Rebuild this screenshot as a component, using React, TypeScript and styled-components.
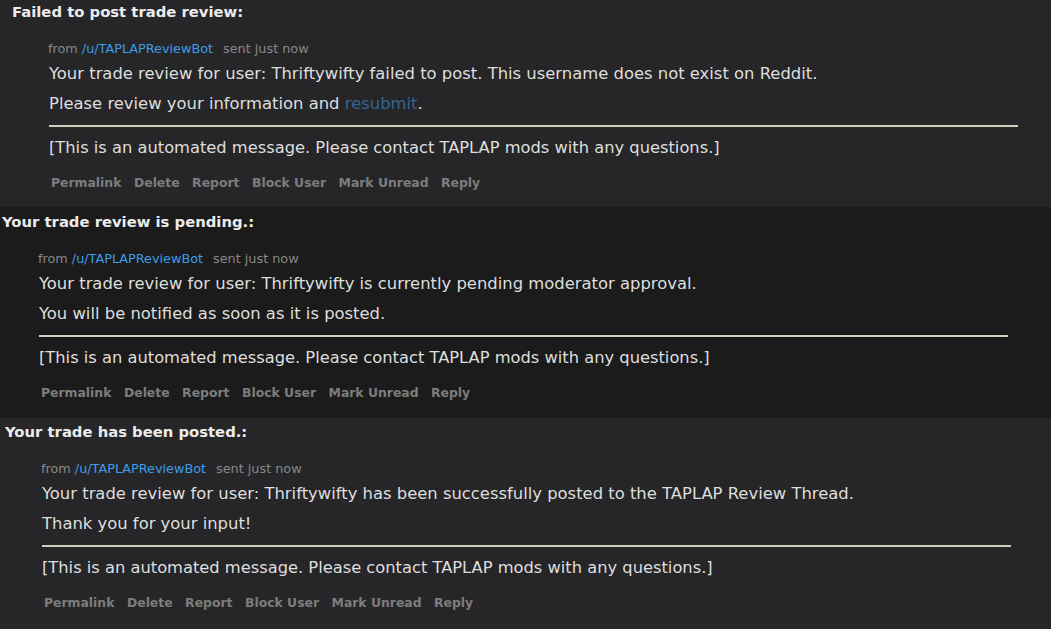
import React from "react";
import styled, { createGlobalStyle } from "styled-components";

const Global = createGlobalStyle`
  html, body { margin: 0; padding: 0; background: #262628; }
  body { font-family: "DejaVu Sans", Verdana, sans-serif; }
`;

const Page = styled.div`
  width: 1051px;
  height: 629px;
  overflow: hidden;
  display: flex;
  flex-direction: column;
`;

const Panel = styled.section<{ $bg: string; $left: number; $height: number; $top: number }>`
  background: ${(p) => p.$bg};
  height: ${(p) => p.$height}px;
  padding: ${(p) => p.$top}px 0 0 ${(p) => p.$left}px;
  box-sizing: border-box;
  flex-shrink: 0;
`;

const Title = styled.h2`
  margin: 0;
  font-size: 14.8px;
  line-height: 18px;
  font-weight: bold;
  color: #ececec;
`;

const Message = styled.div`
  margin: 19px 0 0 36px;
  width: 970px;
`;

const Meta = styled.div`
  font-size: 12.8px;
  line-height: 18px;
  color: #888888;
  margin-bottom: 1px;
`;

const UserLink = styled.a`
  color: #3c9de8;
  text-decoration: none;
  margin-right: 10px;
`;

const Body = styled.p`
  margin: 0 0 0 1px;
  font-size: 16.4px;
  line-height: 30px;
  color: #dedede;
`;

const Footnote = styled(Body)`
  font-size: 16.3px;
`;

const Resubmit = styled.a`
  color: #34658f;
  text-decoration: none;
`;

const Rule = styled.hr`
  border: 0;
  height: 2px;
  background: #d1ccbb;
  margin: 6px 0 6px 1px;
`;

const Buttons = styled.ul`
  list-style: none;
  margin: 11px 0 0 3px;
  padding: 0;
  display: flex;
  gap: 12.5px;
`;

const Button = styled.li`
  font-size: 12.4px;
  line-height: 18px;
  font-weight: bold;
  color: #7d7d7d;
`;

type Msg = {
  title: string;
  bg: string;
  left: number;
  height: number;
  top: number;
  lines: React.ReactNode[];
};

const actions = ["Permalink", "Delete", "Report", "Block User", "Mark Unread", "Reply"];

const messages: Msg[] = [
  {
    title: "Failed to post trade review:",
    bg: "#262628",
    left: 12,
    height: 207,
    top: 3,
    lines: [
      "Your trade review for user: Thriftywifty failed to post. This username does not exist on Reddit.",
      <>
        Please review your information and <Resubmit href="#">resubmit</Resubmit>.
      </>,
    ],
  },
  {
    title: "Your trade review is pending.:",
    bg: "#1b1b1b",
    left: 2,
    height: 211,
    top: 6,
    lines: [
      "Your trade review for user: Thriftywifty is currently pending moderator approval.",
      "You will be notified as soon as it is posted.",
    ],
  },
  {
    title: "Your trade has been posted.:",
    bg: "#262628",
    left: 5,
    height: 211,
    top: 5,
    lines: [
      "Your trade review for user: Thriftywifty has been successfully posted to the TAPLAP Review Thread.",
      "Thank you for your input!",
    ],
  },
];

export default function App() {
  return (
    <Page>
      <Global />
      {messages.map((m, i) => (
        <Panel key={i} $bg={m.bg} $left={m.left} $height={m.height} $top={m.top}>
          <Title>{m.title}</Title>
          <Message>
            <Meta>
              from <UserLink href="#">/u/TAPLAPReviewBot</UserLink>sent just now
            </Meta>
            {m.lines.map((l, j) => (
              <Body key={j}>{l}</Body>
            ))}
            <Rule />
            <Footnote>[This is an automated message. Please contact TAPLAP mods with any questions.]</Footnote>
            <Buttons>
              {actions.map((a) => (
                <Button key={a}>{a}</Button>
              ))}
            </Buttons>
          </Message>
        </Panel>
      ))}
    </Page>
  );
}
